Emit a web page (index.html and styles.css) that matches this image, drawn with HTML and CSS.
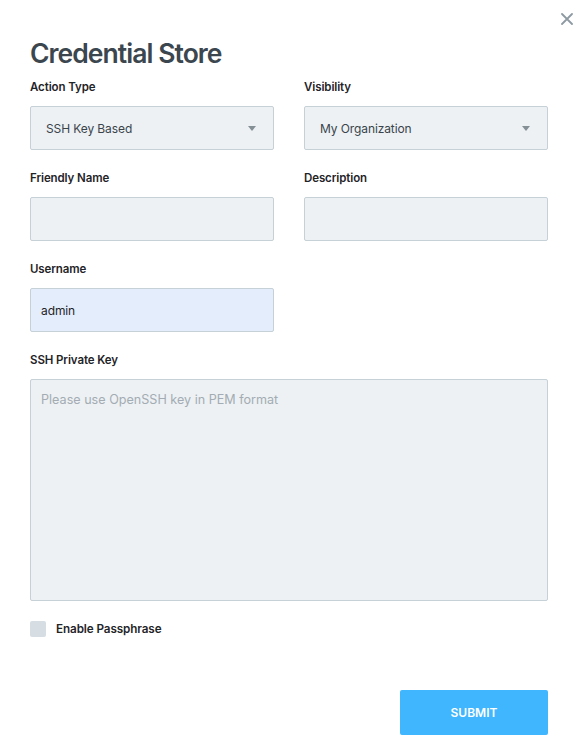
FILE: index.html
```html
<!DOCTYPE html>
<html>
<head>
<meta charset="utf-8">
<link rel="stylesheet" href="styles.css">
</head>
<body>
<div class="modal">
  <button class="close" aria-label="Close">
    <svg width="12" height="12" viewBox="0 0 12 12"><path d="M1 1L11 11M11 1L1 11" stroke="#8e9aa2" stroke-width="1.8" stroke-linecap="round"/></svg>
  </button>
  <h1 class="title">Credential Store</h1>
  <div class="grid">
    <div class="field">
      <label class="label">Action Type</label>
      <div class="input select"><span>SSH Key Based</span><span class="caret"></span></div>
    </div>
    <div class="field">
      <label class="label">Visibility</label>
      <div class="input select"><span>My Organization</span><span class="caret"></span></div>
    </div>
    <div class="field">
      <label class="label">Friendly Name</label>
      <div class="input"></div>
    </div>
    <div class="field">
      <label class="label">Description</label>
      <div class="input"></div>
    </div>
    <div class="field">
      <label class="label">Username</label>
      <div class="input filled">admin</div>
    </div>
    <div class="field"></div>
    <div class="field wide">
      <label class="label">SSH Private Key</label>
      <div class="textarea">Please use OpenSSH key in PEM format</div>
    </div>
  </div>
  <div class="check-row">
    <span class="checkbox"></span>
    <span class="check-label">Enable Passphrase</span>
  </div>
  <div class="actions">
    <button class="submit">SUBMIT</button>
  </div>
</div>
</body>
</html>
```
FILE: styles.css
```css
* { box-sizing: border-box; }
html, body { margin: 0; padding: 0; background: #fff; }
body { font-family: Inter, "Noto Sans", sans-serif; color: #2c3338; }
.modal { position: relative; width: 582px; height: 750px; padding: 36px 34px 0 30px; }
.close { position: absolute; top: 13px; right: 9px; border: 0; background: none; padding: 0; width: 12px; height: 12px; cursor: pointer; }
.close svg { display: block; }
.title { margin: 0 0 9px; font-size: 26.5px; line-height: 34px; font-weight: 600; color: #3b464e; letter-spacing: -0.95px; }
.grid { display: grid; grid-template-columns: 244px 244px; column-gap: 30px; }
.field { margin-bottom: 20px; }
.wide { grid-column: 1 / span 2; margin-bottom: 20px; }
.label { display: block; font-size: 11.5px; line-height: 16px; font-weight: 600; color: #1f2428; margin-bottom: 11px; letter-spacing: -0.1px; }
.input { height: 44px; background: #edf1f4; border: 1px solid #c6d0d7; border-radius: 2px; padding: 0 15px; display: flex; align-items: center; font-size: 12px; color: #3a444b; letter-spacing: -0.1px; }
.select { justify-content: space-between; }
.caret { width: 0; height: 0; border-left: 4px solid transparent; border-right: 4px solid transparent; border-top: 5px solid #858f96; margin-right: 2px; }
.filled { background: #e4edfb; padding: 0 10px; color: #1f2428; }
.textarea { height: 222px; background: #edf1f4; border: 1px solid #c6d0d7; border-radius: 2px; padding: 12px 10px; font-size: 12.6px; color: #a3acb2; }
.check-row { display: flex; align-items: center; gap: 10px; height: 16px; }
.checkbox { width: 16px; height: 16px; background: #d6dee4; border-radius: 2px; }
.check-label { font-size: 11.7px; font-weight: 600; color: #1f2428; letter-spacing: -0.1px; }
.actions { display: flex; justify-content: flex-end; margin-top: 53px; }
.submit { width: 148px; height: 45px; background: #40b6ff; border: 0; border-radius: 2px; color: #fff; font-family: Inter, sans-serif; font-size: 12px; font-weight: 600; letter-spacing: 0px; }
```
